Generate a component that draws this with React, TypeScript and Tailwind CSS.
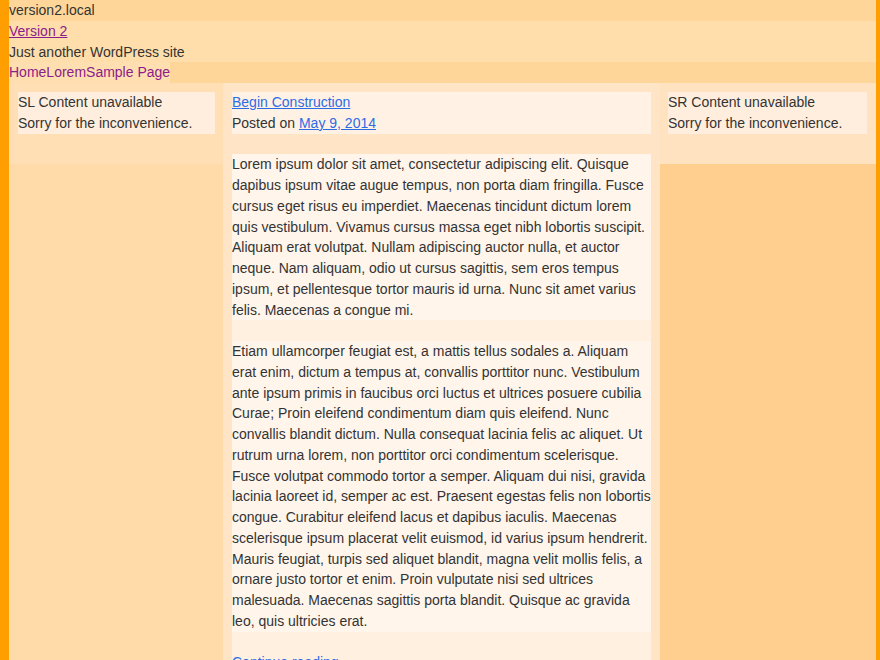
import React from 'react'

const paragraphs = [
    "Lorem ipsum dolor sit amet, consectetur adipiscing elit. Quisque dapibus ipsum vitae augue tempus, non porta diam fringilla. Fusce cursus eget risus eu imperdiet. Maecenas tincidunt dictum lorem quis vestibulum. Vivamus cursus massa eget nibh lobortis suscipit. Aliquam erat volutpat. Nullam adipiscing auctor nulla, et auctor neque. Nam aliquam, odio ut cursus sagittis, sem eros tempus ipsum, et pellentesque tortor mauris id urna. Nunc sit amet varius felis. Maecenas a congue mi.",
    "Etiam ullamcorper feugiat est, a mattis tellus sodales a. Aliquam erat enim, dictum a tempus at, convallis porttitor nunc. Vestibulum ante ipsum primis in faucibus orci luctus et ultrices posuere cubilia Curae; Proin eleifend condimentum diam quis eleifend. Nunc convallis blandit dictum. Nulla consequat lacinia felis ac aliquet. Ut rutrum urna lorem, non porttitor orci condimentum scelerisque. Fusce volutpat commodo tortor a semper. Aliquam dui nisi, gravida lacinia laoreet id, semper ac est. Praesent egestas felis non lobortis congue. Curabitur eleifend lacus et dapibus iaculis. Maecenas scelerisque ipsum placerat velit euismod, id varius ipsum hendrerit. Mauris feugiat, turpis sed aliquet blandit, magna velit mollis felis, a ornare justo tortor et enim. Proin vulputate nisi sed ultrices malesuada. Maecenas sagittis porta blandit. Quisque ac gravida leo, quis ultricies erat.",
]

const Sidebar = ({ label, className }: { label: string; className: string }) => (
    <div className={className}>
        <div className="bg-[#ffeedd]">
            <div>{label} Content unavailable</div>
            <div>Sorry for the inconvenience.</div>
        </div>
    </div>
)

export default function App() {
    return (
        <div className="min-h-[660px] h-[660px] overflow-hidden bg-[#ffcf8f] border-l-[9px] border-r-[4px] border-[#ff9e00] text-[14px] leading-[20.75px] text-[#333333] font-['Liberation_Sans',Arial,sans-serif] flex flex-col">
            <div className="bg-[#ffd699]">version2.local</div>
            <header className="bg-[#ffdeab]">
                <div>
                    <a href="#" className="text-[#8b1c8b] underline">Version 2</a>
                </div>
                <div>Just another WordPress site</div>
            </header>
            <nav className="bg-[#ffd699] flex">
                <div className="bg-[#ffdfb0] text-[#8b1c8b] flex">
                    <a href="#">Home</a>
                    <a href="#">Lorem</a>
                    <a href="#">Sample Page</a>
                </div>
            </nav>
            <div className="flex flex-1 items-start">
                <div className="w-[214px] self-stretch bg-[#ffdba9]">
                    <Sidebar label="SL" className="bg-[#ffdfb3] pt-[9px] pl-[9px] pr-[8px] pb-[30px]" />
                </div>
                <main className="w-[437px] self-stretch bg-[#ffe4c5] pt-[9px] px-[9px]">
                    <div className="bg-[#fff2e4]">
                        <div>
                            <a href="#" className="text-[#2d6be4] underline">Begin Construction</a>
                        </div>
                        <div>
                            Posted on <a href="#" className="text-[#2d6be4] underline">May 9, 2014</a>
                        </div>
                    </div>
                    <div className="mt-[20.75px] bg-[#fff0e0]">
                        {paragraphs.map((p, i) => (
                            <p key={i} className="bg-[#fff5eb] mb-[20.75px]">{p}</p>
                        ))}
                        <p>
                            <a href="#" className="text-[#2d6be4] underline">Continue reading →</a>
                        </p>
                    </div>
                </main>
                <Sidebar label="SR" className="flex-1 bg-[#ffe2c0] pt-[9px] pl-[8px] pr-[9px] pb-[30px]" />
            </div>
        </div>
    )
}
